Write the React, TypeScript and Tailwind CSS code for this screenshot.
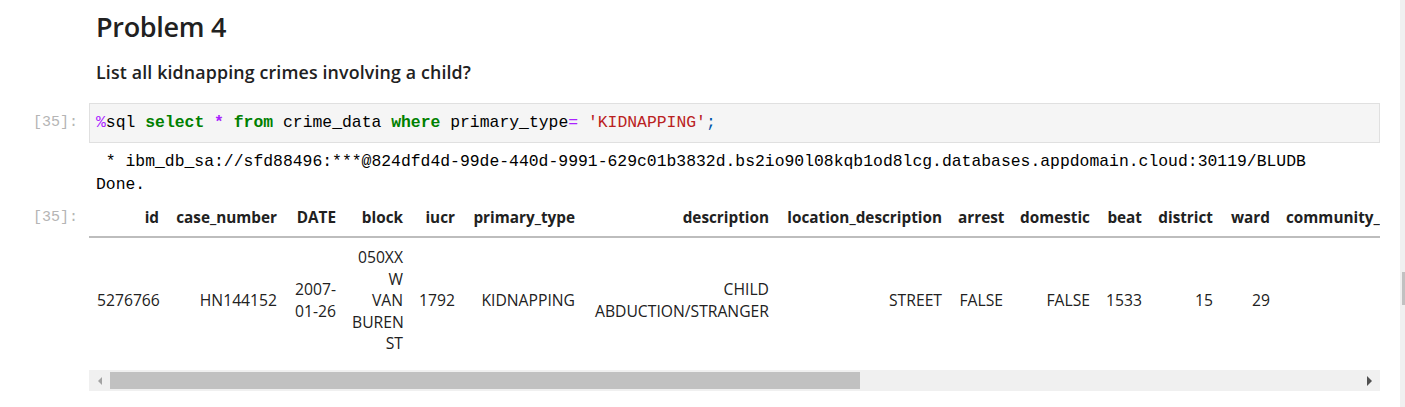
import React from "react";

const sans = { fontFamily: '"Open Sans", "Noto Sans", Arial, sans-serif' };
const mono = { fontFamily: '"Liberation Mono", "DejaVu Sans Mono", monospace' };

type Col = { name: string; w: number; cell: string[]; left?: boolean };

const cols: Col[] = [
  { name: "id", w: 78, cell: ["5276766"] },
  { name: "case_number", w: 118, cell: ["HN144152"] },
  { name: "DATE", w: 59, cell: ["2007-", "01-26"] },
  { name: "block", w: 67, cell: ["050XX", "W", "VAN", "BUREN", "ST"] },
  { name: "iucr", w: 52, cell: ["1792"] },
  { name: "primary_type", w: 120, cell: ["KIDNAPPING"] },
  { name: "description", w: 194, cell: ["CHILD", "ABDUCTION/STRANGER"] },
  { name: "location_description", w: 173, cell: ["STREET"] },
  { name: "arrest", w: 61, cell: ["FALSE"] },
  { name: "domestic", w: 87, cell: ["FALSE"] },
  { name: "beat", w: 52, cell: ["1533"] },
  { name: "district", w: 71, cell: ["15"] },
  { name: "ward", w: 57, cell: ["29"] },
  { name: "community_area_number", w: 220, cell: [""], left: true },
];

function Prompt({ className = "" }: { className?: string }) {
  return (
    <div
      className={`w-[89px] shrink-0 pr-[11px] text-right text-[15px] text-[#b5b5b5] ${className}`}
      style={mono}
    >
      [35]:
    </div>
  );
}

export default function App() {
  return (
    <div className="flex h-[407px] w-[1405px] overflow-hidden bg-white text-[#212121]">
      <div className="w-[1400px] shrink-0">
        {/* Markdown cell */}
        <div className="pl-[96px] pt-[9px]" style={sans}>
          <h2 className="text-[27px] font-semibold leading-[36px] tracking-[-0.3px]">Problem 4</h2>
          <p className="mt-[15px] text-[17.8px] font-semibold leading-[24px] tracking-[0.15px]">
            List all kidnapping crimes involving a child?
          </p>
        </div>

        {/* Code cell */}
        <div className="mt-[19px] flex items-center">
          <Prompt />
          <div
            className="h-[40px] w-[1291px] border border-[#e0e0e0] bg-[#f5f5f5] px-[6px] text-[16.4px] leading-[38px] text-[#000]"
            style={mono}
          >
            <span className="text-[#aa22ff]">%</span>sql{" "}
            <span className="font-bold text-[#008000]">select</span>{" "}
            <span className="font-bold text-[#aa22ff]">*</span>{" "}
            <span className="font-bold text-[#008000]">from</span> crime_data{" "}
            <span className="font-bold text-[#008000]">where</span> primary_type
            <span className="text-[#aa22ff]">=</span>{" "}
            <span className="text-[#ba2121]">'KIDNAPPING'</span>
            <span className="text-[#0055aa]">;</span>
          </div>
        </div>

        {/* Output text */}
        <div
          className="mt-[7px] pl-[96px] text-[16.4px] leading-[23px] whitespace-pre text-[#000]"
          style={mono}
        >
          <div> * ibm_db_sa://sfd88496:***@824dfd4d-99de-440d-9991-629c01b3832d.bs2io90l08kqb1od8lcg.databases.appdomain.cloud:30119/BLUDB</div>
          <div>Done.</div>
        </div>

        {/* Table output */}
        <div className="mt-[3px] flex items-start">
          <Prompt className="pt-[8px] leading-[21px]" />
          <div className="w-[1291px]">
            <div className="w-[1291px] overflow-hidden">
              <table className="w-[1369px] table-fixed border-collapse" style={sans}>
                <thead>
                  <tr className="border-b-2 border-[#bdbdbd]">
                    {cols.map((c) => (
                      <th
                        key={c.name}
                        style={{ width: c.w }}
                        className={`whitespace-nowrap px-2 py-2 align-middle text-[15.3px] font-bold leading-[21.3px] text-[#212121] ${c.left ? "text-left" : "text-right"}`}
                      >
                        {c.name}
                      </th>
                    ))}
                  </tr>
                </thead>
                <tbody>
                  <tr>
                    {cols.map((c) => (
                      <td
                        key={c.name}
                        className="whitespace-nowrap px-2 pb-[7px] pt-[9px] text-right align-middle text-[15.7px] leading-[21.4px] text-[#212121]"
                      >
                        {c.cell.map((l, i) => (
                          <div key={i}>{l}</div>
                        ))}
                      </td>
                    ))}
                  </tr>
                </tbody>
              </table>
            </div>
            {/* horizontal scrollbar */}
            <div className="mt-[9px] flex h-[21px] w-[1291px] items-center bg-[#f0f0f0]">
              <div className="flex w-[21px] justify-center">
                <div className="h-0 w-0 border-y-[4px] border-r-[4px] border-y-transparent border-r-[#a3a3a3]" />
              </div>
              <div className="h-[17px] w-[750px] bg-[#c1c1c1]" />
              <div className="flex-1" />
              <div className="flex w-[21px] justify-center">
                <div className="h-0 w-0 border-y-[5px] border-l-[5px] border-y-transparent border-l-[#505050]" />
              </div>
            </div>
          </div>
        </div>
      </div>
      {/* page vertical scrollbar strip */}
      <div className="flex h-full w-[5px] shrink-0 flex-col bg-[#f0f0f0]">
        <div className="h-[272px]" />
        <div className="ml-[2px] h-[33px] w-[3px] bg-[#c1c1c1]" />
      </div>
    </div>
  );
}
